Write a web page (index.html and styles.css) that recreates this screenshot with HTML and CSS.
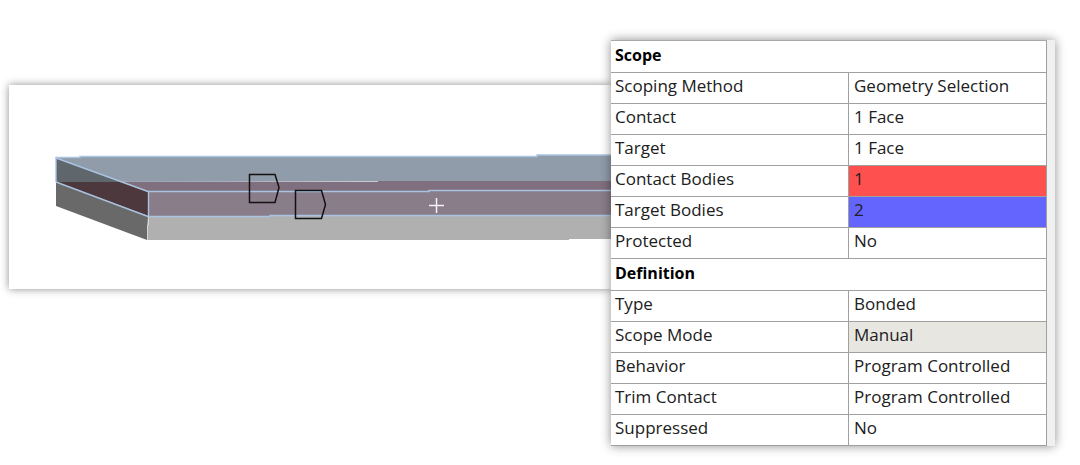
FILE: index.html
```html
<!DOCTYPE html>
<html lang="en">
<head>
  <meta charset="UTF-8">
  <meta name="viewport" content="width=device-width, initial-scale=1">
  <title>Contact Region</title>
  <link rel="stylesheet" href="styles.css">
</head>
<body>

  <main class="workspace">
    <section class="viewport">
      <svg class="model" viewBox="9 85 602 204" role="img" aria-label="Bonded plates">
        <!-- Lower plate -->
        <polygon points="56,182 148,216 147,240 56,206" fill="#696969" />
        <polygon points="148,216 611,215 611,239 569,239 569,240 147,240" fill="#b0b0b0" />

        <!-- Upper plate -->
        <polygon points="56,158 80,157 80,156 537,156 537,155 611,155 611,181 56,182" fill="#909ca9" />
        <polygon points="120,182 378,182 378,181 611,181 611,192 148,192" fill="#806f7e" />
        <polygon points="56,158 121,182 56,182" fill="#5f666c" />
        <polygon points="56,182 121,182 148,192 148,216" fill="#4d393d" />
        <polygon points="148,192 429,192 429,190 611,190 611,216 148,216" fill="#8a7d8a" />

        <!-- Highlighted edges -->
        <g class="edges">
          <path d="M56 182V157.5H80V156.500H537V155H611" />
          <path d="M56 158L148 191.500H429V190.500H611" />
          <path d="M56 182L148 216.500H270V215.500H611" />
          <path d="M148.500 192V216" />
        </g>
        <path d="M148.500 217V225H147.500V240" class="corner" />

        <!-- Body labels -->
        <g class="tags">
          <path d="M249.500 174.500H275L279 187.500L275 202.500H249.500Z" />
          <path d="M295.500 190.500H321.500L325.500 204.500L321.500 218.500H295.500Z" />
        </g>
        <path d="M429 205.500H444M436.500 198V213" class="cursor" />
      </svg>
    </section>

    <section class="details">
      <table class="properties">
        <colgroup>
          <col class="name">
          <col>
        </colgroup>
        <tbody>
          <tr class="group"><th colspan="2" scope="rowgroup">Scope</th></tr>
          <tr><th scope="row">Scoping Method</th><td>Geometry Selection</td></tr>
          <tr><th scope="row">Contact</th><td>1 Face</td></tr>
          <tr><th scope="row">Target</th><td>1 Face</td></tr>
          <tr><th scope="row">Contact Bodies</th><td class="contact">1</td></tr>
          <tr><th scope="row">Target Bodies</th><td class="target">2</td></tr>
          <tr><th scope="row">Protected</th><td>No</td></tr>
        </tbody>
        <tbody>
          <tr class="group"><th colspan="2" scope="rowgroup">Definition</th></tr>
          <tr><th scope="row">Type</th><td>Bonded</td></tr>
          <tr><th scope="row">Scope Mode</th><td class="readonly">Manual</td></tr>
          <tr><th scope="row">Behavior</th><td>Program Controlled</td></tr>
          <tr><th scope="row">Trim Contact</th><td>Program Controlled</td></tr>
          <tr><th scope="row">Suppressed</th><td>No</td></tr>
        </tbody>
      </table>
    </section>
  </main>

</body>
</html>
```
FILE: styles.css
```css
* {
  box-sizing: border-box;
}

body {
  margin: 0;
  background: #fff;
  color: #202020;
  font-family: "Open Sans", "Noto Sans", sans-serif;
  font-size: 17px;
  line-height: 24px;
}

.workspace {
  display: flex;
  align-items: flex-start;
  padding: 40px 25px 16px 9px;
}

.viewport {
  flex: 1;
  min-width: 0;
  margin-top: 45px;
  background: #fff;
  box-shadow: 0 0 8px rgba(0, 0, 0, 0.45);
}

.model {
  display: block;
  width: 100%;
  height: auto;
}

.edges {
  fill: none;
  stroke: #a9c3e0;
  stroke-width: 1.4;
}

.corner {
  fill: none;
  stroke: #d5d5d5;
}

.tags {
  fill: none;
  stroke: #111;
  stroke-width: 1.5;
}

.cursor {
  stroke: #f4f4f4;
  stroke-width: 1.5;
}

.details {
  position: relative;
  flex: 0 0 444px;
  padding-right: 8px;
  background: #f0f0f0;
  box-shadow: 0 0 10px rgba(0, 0, 0, 0.45);
}

.properties {
  width: 100%;
  table-layout: fixed;
  border-collapse: separate;
  border-spacing: 0;
  border-top: 1px solid #aaa;
  background: #fff;
}

.properties .name {
  width: 238px;
}

.properties th,
.properties td {
  height: 31px;
  padding: 0 4px 5px;
  border-right: 1px solid #a0a0a0;
  border-bottom: 1px solid #a0a0a0;
  font-weight: normal;
  text-align: left;
  white-space: nowrap;
}

.properties td {
  padding-left: 5px;
}

.properties .group th {
  height: 32px;
  padding-bottom: 4px;
  color: #000;
  font-size: 16px;
  font-weight: bold;
}

.properties .contact {
  background: #ff5050;
}

.properties .target {
  background: #6464ff;
}

.properties .readonly {
  background: #e7e6e1;
}
```
